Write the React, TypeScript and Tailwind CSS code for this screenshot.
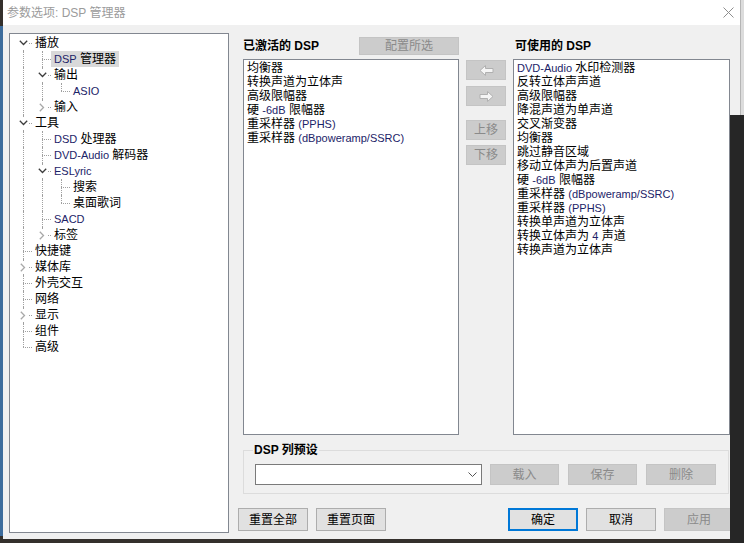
import React from "react";

type Node = {
  label: string;
  open?: boolean;
  closed?: boolean;
  selected?: boolean;
  children?: Node[];
};

const tree: Node[] = [
  {
    label: "播放",
    open: true,
    children: [
      { label: "DSP 管理器", selected: true },
      { label: "输出", open: true, children: [{ label: "ASIO" }] },
      { label: "输入", closed: true },
    ],
  },
  {
    label: "工具",
    open: true,
    children: [
      { label: "DSD 处理器" },
      { label: "DVD-Audio 解码器" },
      { label: "ESLyric", open: true, children: [{ label: "搜索" }, { label: "桌面歌词" }] },
      { label: "SACD" },
      { label: "标签", closed: true },
    ],
  },
  { label: "快捷键" },
  { label: "媒体库", closed: true },
  { label: "外壳交互" },
  { label: "网络" },
  { label: "显示", closed: true },
  { label: "组件" },
  { label: "高级" },
];

type Row = { node: Node; guides: boolean[]; hasNext: boolean; first: boolean };

const flatten = (nodes: Node[], guides: boolean[], out: Row[]) => {
  nodes.forEach((n, i) => {
    const hasNext = i < nodes.length - 1;
    out.push({ node: n, guides, hasNext, first: guides.length === 0 && i === 0 });
    if (n.children && n.open) flatten(n.children, [...guides, hasNext], out);
  });
  return out;
};

const rows = flatten(tree, [], []);

const activeDsp = [
  "均衡器",
  "转换声道为立体声",
  "高级限幅器",
  "硬 -6dB 限幅器",
  "重采样器 (PPHS)",
  "重采样器 (dBpoweramp/SSRC)",
];

const availableDsp = [
  "DVD-Audio 水印检测器",
  "反转立体声声道",
  "高级限幅器",
  "降混声道为单声道",
  "交叉渐变器",
  "均衡器",
  "跳过静音区域",
  "移动立体声为后置声道",
  "硬 -6dB 限幅器",
  "重采样器 (dBpoweramp/SSRC)",
  "重采样器 (PPHS)",
  "转换单声道为立体声",
  "转换立体声为 4 声道",
  "转换声道为立体声",
];

// latin runs come out bluish (cleartype), cjk stays black
const Mixed = ({ text }: { text: string }) => {
  const parts = text.split(/([A-Za-z0-9()\-\/.]+(?: [A-Za-z0-9()\-\/.]+)*)/);
  return (
    <>
      {parts.map((p, i) =>
        /[A-Za-z0-9]/.test(p) ? (
          <span key={i} className="text-[11px] text-[#1c2368]">
            {p}
          </span>
        ) : (
          <span key={i}>{p}</span>
        )
      )}
    </>
  );
};

const Chevron = ({ open }: { open: boolean }) => (
  <span className="absolute left-[4px] top-[2px] flex h-[12px] w-[12px] items-center justify-center bg-white">
    {open ? (
      <svg width="9" height="6" viewBox="0 0 9 6">
        <path d="M0.8 0.8 L4.5 4.5 L8.2 0.8" fill="none" stroke="#3c3c3c" strokeWidth="1.3" />
      </svg>
    ) : (
      <svg width="6" height="9" viewBox="0 0 6 9">
        <path d="M0.8 0.8 L4.5 4.5 L0.8 8.2" fill="none" stroke="#a8a8a8" strokeWidth="1.3" />
      </svg>
    )}
  </span>
);

const TreeRow = ({ row }: { row: Row }) => {
  const { node, guides, hasNext, first } = row;
  return (
    <div className="flex h-[16px] items-stretch">
      {guides.map((cont, i) => (
        <div key={i} className="relative w-[19px] shrink-0">
          {cont && <span className="absolute bottom-0 left-[10px] top-0 border-l border-dotted border-[#a0a0a0]" />}
        </div>
      ))}
      <div className="relative w-[19px] shrink-0">
        <span
          className={`absolute left-[10px] border-l border-dotted border-[#a0a0a0] ${first ? "top-[8px]" : "top-0"} ${
            hasNext ? "bottom-0" : "h-[8px]"
          }`}
        />
        <span className="absolute left-[10px] right-0 top-[8px] border-t border-dotted border-[#a0a0a0]" />
        {(node.open || node.closed) && <Chevron open={!!node.open} />}
      </div>
      <span className={`whitespace-nowrap px-[3px] text-[12px] leading-[16px] text-black ${node.selected ? "bg-[#d9d9d9]" : ""}`}>
        <Mixed text={node.label} />
      </span>
    </div>
  );
};

const Btn = ({
  children,
  className = "",
  disabled,
  primary,
}: {
  children?: React.ReactNode;
  className?: string;
  disabled?: boolean;
  primary?: boolean;
}) => (
  <div
    className={`flex shrink-0 items-center justify-center text-[12px] ${
      disabled
        ? "border border-[#c4c4c4] bg-[#cccccc] text-[#8a8a8a]"
        : primary
        ? "border-2 border-[#0078d7] bg-[#e1e1e1] text-black"
        : "border border-[#adadad] bg-[#e1e1e1] text-black"
    } ${className}`}
  >
    {children}
  </div>
);

const Arrow = ({ dir }: { dir: "left" | "right" }) => (
  <svg width="15" height="11" viewBox="0 0 15 11">
    <path
      d={dir === "left" ? "M1 5.5 L6.5 0.5 L6.5 3.5 L14 3.5 L14 7.5 L6.5 7.5 L6.5 10.5 Z" : "M14 5.5 L8.5 0.5 L8.5 3.5 L1 3.5 L1 7.5 L8.5 7.5 L8.5 10.5 Z"}
      fill="#f5f5f5"
      stroke="#b0b0b0"
      strokeWidth="1"
    />
  </svg>
);

const DspList = ({ items, className = "" }: { items: string[]; className?: string }) => (
  <div className={`mt-[4px] h-[376px] border border-[#828790] bg-white pl-[3px] pt-[1px] ${className}`}>
    {items.map((t, i) => (
      <div key={i} className="h-[14px] whitespace-nowrap text-[12px] leading-[14px] text-black">
        <Mixed text={t} />
      </div>
    ))}
  </div>
);

export default function App() {
  return (
    <div className="relative h-[543px] w-[744px] overflow-hidden bg-[#34302c] [font-family:'Liberation_Sans','Noto_Sans_CJK_SC',sans-serif]">
      <div className="absolute left-0 top-[26px] h-[510px] w-[3px] bg-[#3d6c9c]" />
      <div className="ml-[3px] flex h-[539px] w-[737px] flex-col bg-[#f0f0f0]">
        {/* title bar */}
        <div className="flex h-[25px] shrink-0 items-center justify-between bg-white pl-[4px] pr-[6px]">
          <span className="text-[12px] text-[#9b9b9b]">参数选项: DSP 管理器</span>
          <svg width="11" height="11" viewBox="0 0 11 11">
            <path d="M0.5 0.5 L10.5 10.5 M10.5 0.5 L0.5 10.5" stroke="#8e8e8e" strokeWidth="1" />
          </svg>
        </div>

        <div className="flex flex-1 pl-[6px] pt-[8px]">
          {/* tree */}
          <div className="h-[500px] w-[220px] shrink-0 border border-[#828790] bg-white pl-[3px] pt-[1px]">
            {rows.map((r, i) => (
              <TreeRow key={i} row={r} />
            ))}
          </div>

          {/* right side */}
          <div className="ml-[9px] flex flex-col pt-[4px]">
            <div className="ml-[5px] flex">
              <div className="w-[216px] shrink-0">
                <div className="flex h-[18px] items-center justify-between">
                  <span className="text-[12px] font-bold text-black">已激活的 DSP</span>
                  <Btn disabled className="h-[18px] w-[100px]">
                    配置所选
                  </Btn>
                </div>
                <DspList items={activeDsp} />
              </div>

              <div className="ml-[7px] flex w-[40px] shrink-0 flex-col pt-[23px]">
                <Btn disabled className="h-[20px] w-[40px]">
                  <Arrow dir="left" />
                </Btn>
                <Btn disabled className="mt-[6px] h-[20px] w-[40px]">
                  <Arrow dir="right" />
                </Btn>
                <Btn disabled className="mt-[14px] h-[20px] w-[40px]">
                  上移
                </Btn>
                <Btn disabled className="mt-[5px] h-[20px] w-[40px]">
                  下移
                </Btn>
              </div>

              <div className="ml-[7px] w-[217px] shrink-0">
                <div className="flex h-[18px] items-center pl-[2px]">
                  <span className="text-[12px] font-bold text-black">可使用的 DSP</span>
                </div>
                <DspList items={availableDsp} />
              </div>
            </div>

            {/* preset group */}
            <div className="relative ml-[5px] mt-[15px] flex h-[44px] w-[486px] border border-[#dcdcdc] pl-[11px] pt-[13px]">
              <span className="absolute left-[9px] top-[-9px] bg-[#f0f0f0] px-[1px] text-[12px] font-bold leading-[16px] text-black">
                DSP 列预设
              </span>
              <div className="flex h-[21px] w-[227px] items-center justify-end border border-[#7a7a7a] bg-white pr-[4px]">
                <svg width="9" height="5" viewBox="0 0 9 5">
                  <path d="M0.5 0.5 L4.5 4.5 L8.5 0.5" fill="none" stroke="#555" strokeWidth="1" />
                </svg>
              </div>
              <Btn disabled className="ml-[8px] h-[21px] w-[69px]">
                载入
              </Btn>
              <Btn disabled className="ml-[9px] h-[21px] w-[69px]">
                保存
              </Btn>
              <Btn disabled className="ml-[9px] h-[21px] w-[70px]">
                删除
              </Btn>
            </div>

            {/* dialog buttons */}
            <div className="mt-[14px] flex">
              <Btn className="h-[23px] w-[70px]">重置全部</Btn>
              <Btn className="ml-[8px] h-[23px] w-[70px]">重置页面</Btn>
              <Btn primary className="ml-[122px] h-[23px] w-[70px]">
                确定
              </Btn>
              <Btn className="ml-[8px] h-[23px] w-[70px]">取消</Btn>
              <Btn disabled className="ml-[8px] h-[23px] w-[70px]">
                应用
              </Btn>
            </div>
          </div>
        </div>
      </div>

      {/* desktop / other windows around the dialog */}
      <div className="absolute right-0 top-0 h-[115px] w-[4px] border-l border-[#b5b5b5] bg-[#dcdcdc]" />
      <div className="absolute right-0 top-[115px] h-[428px] w-[14px] bg-[#262626]" />
    </div>
  );
}
